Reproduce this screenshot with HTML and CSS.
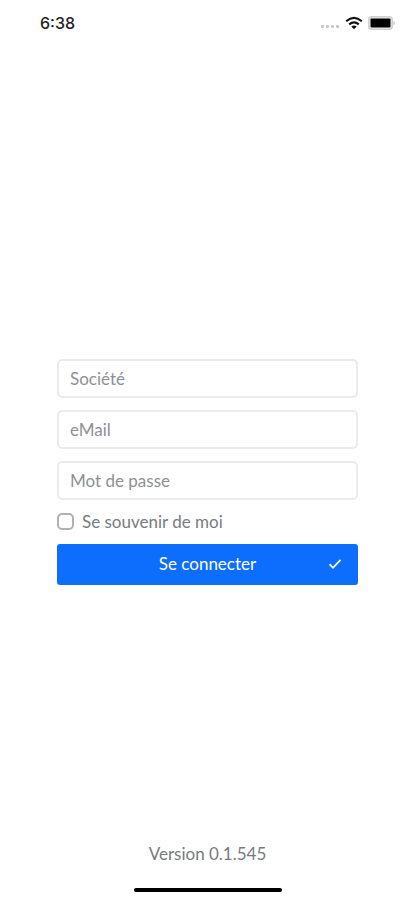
FILE: index.html
```html
<!DOCTYPE html>
<html lang="fr">
<head>
<meta charset="utf-8">
<meta name="viewport" content="width=device-width, initial-scale=1">
<title>Se connecter</title>
<link rel="stylesheet" href="styles.css">
</head>
<body>
<header class="status">
  <time class="clock">6:38</time>
  <div class="indicators">
    <svg class="signal" width="20" height="4" viewBox="0 0 20 4" aria-hidden="true"><g fill="#c8c8c8"><rect x="1" width="3" height="3" rx="1"/><rect x="6" width="3" height="3" rx="1"/><rect x="11" width="3" height="3" rx="1"/><rect x="16" width="3" height="3" rx="1"/></g></svg>
    <svg width="18" height="14" viewBox="0 0 18 14" fill="none" stroke="#111" stroke-width="2.1" aria-hidden="true"><path d="M1.2 5.2Q9-1.6 16.8 5.2"/><path d="M4.2 8.4Q9 4.2 13.8 8.4"/><path d="M9 13.2 6.3 10.5Q9 8.5 11.7 10.5Z" fill="#111" stroke="none"/></svg>
    <svg width="28" height="14" viewBox="0 0 28 14" aria-hidden="true"><rect x=".75" y=".75" width="23.5" height="12.5" rx="3" fill="#eee" stroke="#d0d0d0" stroke-width="1.5"/><rect x="2.5" y="2.5" width="20" height="9" rx="1" fill="#000"/><path d="M25.5 4.5q2.5 2.5 0 5Z" fill="#bbb"/></svg>
  </div>
</header>
<form class="login">
  <input class="field" type="text" placeholder="Société" aria-label="Société">
  <input class="field" type="email" placeholder="eMail" aria-label="eMail">
  <input class="field" type="password" placeholder="Mot de passe" aria-label="Mot de passe">
  <label class="remember"><input class="check" type="checkbox">Se souvenir de moi</label>
  <button class="submit" type="button">
    <span class="submit-label">Se connecter</span>
    <svg width="14" height="12" viewBox="0 0 14 12" fill="none" stroke="#fff" stroke-width="1.8" aria-hidden="true"><path d="M1.5 6.2 5 9.8 12.5 1.8"/></svg>
  </button>
</form>
<footer class="footer">
  <p class="version">Version 0.1.545</p>
  <div class="home-bar"></div>
</footer>
</body>
</html>
```
FILE: styles.css
```css
* {
  box-sizing: border-box;
}

body {
  margin: 0;
  min-height: 100vh;
  display: grid;
  grid-template-rows: 1fr auto 1fr;
  background: #fff;
  color: #777b80;
  font: 17px/20px Lato, "Open Sans", sans-serif;
}

.status {
  display: flex;
  align-items: center;
  align-self: start;
  justify-content: space-between;
  height: 46px;
  padding: 0 19px 0 40px;
}

.clock {
  color: #222;
  font: 500 16px/20px Inter, sans-serif;
}

.indicators {
  display: flex;
  align-items: center;
  gap: 5px;
}

.signal {
  margin-top: 8px;
}

.login {
  display: flex;
  flex-direction: column;
  gap: 12px;
  margin: 43px 57px 0;
}

.field {
  width: 100%;
  height: 39px;
  padding: 0 11px;
  border: 2px solid #e9ebec;
  border-radius: 5px;
  background: #fff;
  color: #212529;
  font: inherit;
}

.field::placeholder {
  color: #8d9194;
  opacity: 1;
}

.remember {
  display: flex;
  align-items: center;
  gap: 8px;
}

.check {
  appearance: none;
  width: 17px;
  height: 17px;
  margin: 0;
  border: 2px solid #b0b0b0;
  border-radius: 5px;
  background: #fff;
}

.check:checked {
  border-color: #0d6efd;
  background: #0d6efd;
}

.submit {
  display: grid;
  grid-template-columns: 1fr auto 1fr;
  align-items: center;
  height: 41px;
  padding: 0 16px;
  border: 0;
  border-radius: 3px;
  background: #0d6efd;
  color: #fff;
  font: inherit;
}

.submit-label {
  grid-column: 2;
}

.submit svg {
  justify-self: end;
}

.footer {
  display: flex;
  flex-direction: column;
  align-items: center;
  align-self: end;
  gap: 24px;
  padding-bottom: 8px;
}

.version {
  margin: 0;
}

.home-bar {
  width: 148px;
  height: 4px;
  border-radius: 2px;
  background: #000;
}
```
